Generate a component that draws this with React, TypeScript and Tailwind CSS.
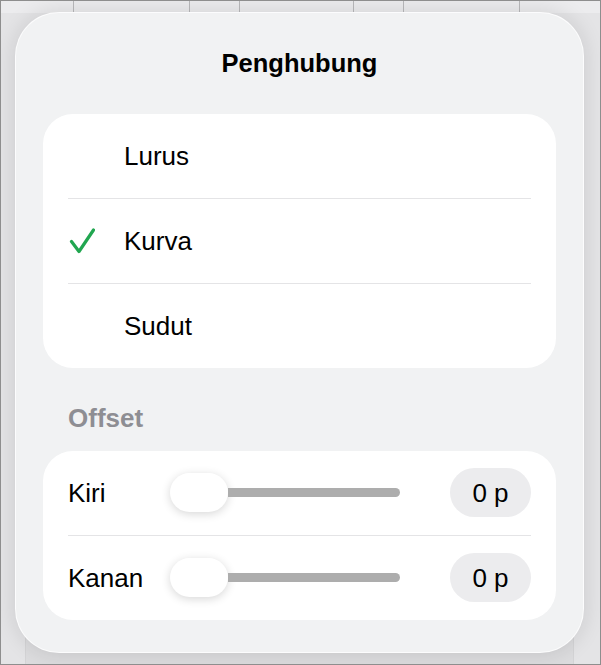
import React from 'react';

// Connector popover ("Penghubung"): line style picker plus offset sliders.

const font = { fontFamily: '"Liberation Sans", Arial, sans-serif' };

function Check() {
  return (
    <svg width="26" height="26" viewBox="0 0 26 26" fill="none">
      <path
        d="M2.5 13.5 L10 23.5 L24.5 2"
        stroke="#21a650"
        strokeWidth="3.2"
        strokeLinecap="round"
        strokeLinejoin="round"
      />
    </svg>
  );
}

function Divider() {
  return <div className="mx-[25px] h-px bg-[#e4e4e6]" />;
}

function StyleRow({ label, checked }: { label: string; checked?: boolean }) {
  return (
    <div className="flex h-[84px] items-center pb-px pl-[26px] text-[26px] leading-[30px] text-black">
      <div className="flex w-[55px] items-center">{checked ? <Check /> : null}</div>
      <span>{label}</span>
    </div>
  );
}

function OffsetRow({ label }: { label: string }) {
  return (
    <div className="flex h-[84px] items-center pb-px px-[25px] text-[26px] leading-[30px] text-black">
      <span className="w-[102px]">{label}</span>
      <div className="flex w-[230px] items-center">
        <div className="h-[39px] w-[58px] shrink-0 rounded-full bg-white shadow-[0_2px_10px_rgba(0,0,0,0.16)]" />
        <div className="h-[9px] flex-1 rounded-r-full bg-[#adadad]" />
      </div>
      <div className="flex-1" />
      <div className="flex h-[49px] w-[81px] items-center justify-center rounded-full bg-[#ececee]">
        0 p
      </div>
    </div>
  );
}

export default function App() {
  return (
    <div
      style={font}
      className="relative h-[665px] w-[601px] overflow-hidden border border-[#8e8e8e] bg-[#e4e4e6]"
    >
      {/* toolbar grid peeking out above the popover */}
      <div className="flex h-[12px] bg-[#ececee]">
        <div className="w-[73px] border-r border-[#b9b9bb]" />
        <div className="w-[116px] border-r border-[#b9b9bb]" />
        <div className="w-[50px] border-r border-[#b9b9bb]" />
        <div className="w-[114px] border-r border-[#b9b9bb]" />
        <div className="w-[50px] border-r border-[#b9b9bb]" />
        <div className="w-[116px] border-r border-[#b9b9bb]" />
      </div>
      <div className="ml-[24px] mr-[26px] mt-[598px] h-[60px] border-x border-[#d4d4d6] bg-[#dcdcde]" />

      <div className="absolute left-[14px] top-[11px] flex h-[641px] w-[569px] flex-col rounded-[44px] border border-white/80 bg-[#f1f2f3] px-[27px] shadow-[0_0_22px_rgba(0,0,0,0.12)]">
        <div className="flex h-[101px] shrink-0 items-center justify-center pb-px text-[25.5px] font-bold text-black">
          Penghubung
        </div>

        <div className="rounded-[30px] bg-white">
          <StyleRow label="Lurus" />
          <Divider />
          <StyleRow label="Kurva" checked />
          <Divider />
          <StyleRow label="Sudut" />
        </div>

        <div className="h-[83px] pl-[25px] pt-[35px] text-[26px] font-bold leading-[30px] text-[#8e8e93]">
          Offset
        </div>

        <div className="rounded-[30px] bg-white">
          <OffsetRow label="Kiri" />
          <Divider />
          <OffsetRow label="Kanan" />
        </div>
      </div>
    </div>
  );
}
